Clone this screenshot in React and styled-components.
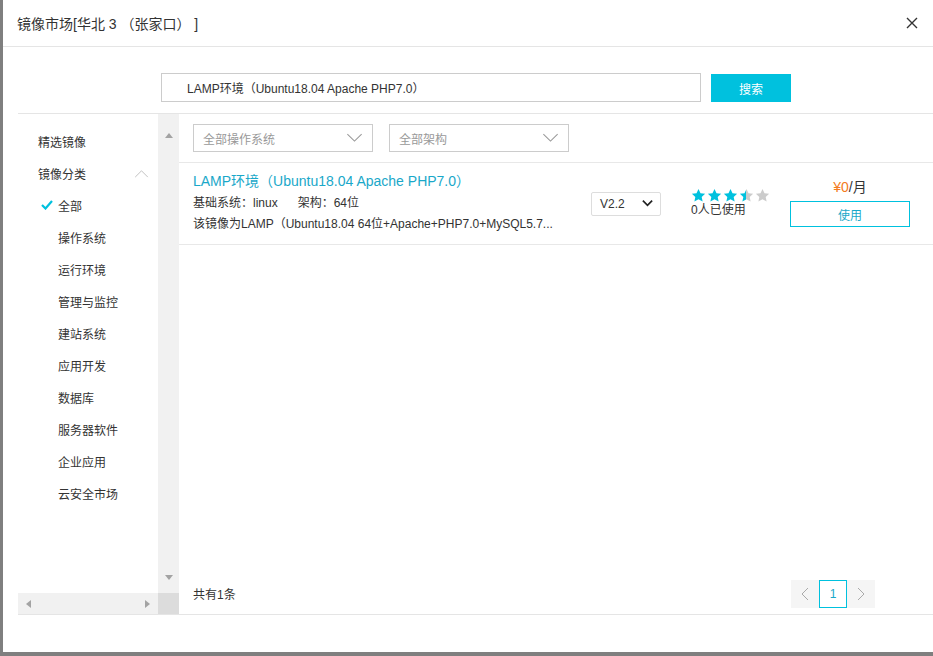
import React from "react";
import styled, { createGlobalStyle } from "styled-components";

const GlobalStyle = createGlobalStyle`
	html, body {
		margin: 0;
		padding: 0;
		background: #7f7f7f;
		font-family: "Liberation Sans", "Noto Sans CJK SC", sans-serif;
		color: #333;
	}
	* {
		box-sizing: border-box;
	}
`;

const categories = [
	"操作系统",
	"运行环境",
	"管理与监控",
	"建站系统",
	"应用开发",
	"数据库",
	"服务器软件",
	"企业应用",
	"云安全市场",
];

const TEAL = "#00c1de";

function Chevron({ size = 16, color = "#999", width = 1, up }) {
	return (
		<svg width={size} height={size * 0.6} viewBox="0 0 16 10">
			<path
				d={up ? "M1 9 L8 2 L15 9" : "M1 1 L8 8 L15 1"}
				fill="none"
				stroke={color}
				strokeWidth={width}
			/>
		</svg>
	);
}

function Star({ fill }) {
	return (
		<svg width="15" height="15" viewBox="0 0 24 24">
			<defs>
				<linearGradient id="half">
					<stop offset="50%" stopColor={TEAL} />
					<stop offset="50%" stopColor="#ccc" />
				</linearGradient>
			</defs>
			<path
				d="M12 1.5l3.2 6.9 7.4.8-5.5 5.1 1.5 7.4L12 17.9l-6.6 3.8 1.5-7.4L1.4 9.2l7.4-.8z"
				fill={fill === "half" ? "url(#half)" : fill ? TEAL : "#ccc"}
			/>
		</svg>
	);
}

function Triangle({ dir }) {
	const d = {
		up: "M0 5 L4 0 L8 5 Z",
		down: "M0 0 L8 0 L4 5 Z",
		left: "M5 0 L5 8 L0 4 Z",
		right: "M0 0 L0 8 L5 4 Z",
	}[dir];
	const vertical = dir === "up" || dir === "down";
	return (
		<svg width={vertical ? 8 : 5} height={vertical ? 5 : 8} viewBox={vertical ? "0 0 8 5" : "0 0 5 8"}>
			<path d={d} fill="#a3a3a3" />
		</svg>
	);
}

export default function App() {
	return (
		<>
			<GlobalStyle />
			<Dialog>
				<Header>
					<Title>镜像市场[华北 3 （张家口） ]</Title>
					<Close>
						<svg width="12" height="12" viewBox="0 0 12 12">
							<path d="M1 1 L11 11 M11 1 L1 11" stroke="#333" strokeWidth="1.4" />
						</svg>
					</Close>
				</Header>
				<SearchRow>
					<SearchInput>LAMP环境（Ubuntu18.04 Apache PHP7.0）</SearchInput>
					<SearchButton>搜索</SearchButton>
				</SearchRow>
				<Body>
					<Sidebar>
						<SideList>
							<SideHead>精选镜像</SideHead>
							<SideHead>
								镜像分类
								<Chevron size={15} color="#bbb" up />
							</SideHead>
							<SideItem $active>
								<Check>
									<svg width="12" height="10" viewBox="0 0 12 10">
										<path d="M1 5 L4.5 8.5 L11 1" fill="none" stroke={TEAL} strokeWidth="2.2" />
									</svg>
								</Check>
								全部
							</SideItem>
							{categories.map((c) => (
								<SideItem key={c}>{c}</SideItem>
							))}
						</SideList>
						<VScroll>
							<Triangle dir="up" />
							<Triangle dir="down" />
						</VScroll>
						<HScroll>
							<Triangle dir="left" />
							<Triangle dir="right" />
						</HScroll>
						<Corner />
					</Sidebar>
					<Main>
						<FilterRow>
							<FilterSelect>
								全部操作系统
								<Chevron size={17} color="#999" />
							</FilterSelect>
							<FilterSelect>
								全部架构
								<Chevron size={17} color="#999" />
							</FilterSelect>
						</FilterRow>
						<ImageRow>
							<Info>
								<ImageName>LAMP环境（Ubuntu18.04 Apache PHP7.0）</ImageName>
								<Meta>
									<span>基础系统：linux</span>
									<span>架构：64位</span>
								</Meta>
								<Desc>该镜像为LAMP（Ubuntu18.04 64位+Apache+PHP7.0+MySQL5.7...</Desc>
							</Info>
							<Version>
								V2.2
								<Chevron size={11} color="#222" width={2.6} />
							</Version>
							<Rating>
								<Stars>
									<Star fill />
									<Star fill />
									<Star fill />
									<Star fill="half" />
									<Star />
								</Stars>
								<span>0人已使用</span>
							</Rating>
							<PriceCol>
								<Price>
									<em>¥0</em>/月
								</Price>
								<UseButton>使用</UseButton>
							</PriceCol>
						</ImageRow>
						<Spacer />
						<Footer>
							<span>共有1条</span>
							<Pager>
								<PageBtn>
									<svg width="8" height="14" viewBox="0 0 8 14">
										<path d="M7 1 L1 7 L7 13" fill="none" stroke="#aaa" />
									</svg>
								</PageBtn>
								<PageBtn $current>1</PageBtn>
								<PageBtn>
									<svg width="8" height="14" viewBox="0 0 8 14">
										<path d="M1 1 L7 7 L1 13" fill="none" stroke="#aaa" />
									</svg>
								</PageBtn>
							</Pager>
						</Footer>
					</Main>
				</Body>
			</Dialog>
		</>
	);
}

const Dialog = styled.div`
	margin-left: 3px;
	width: 930px;
	height: 652px;
	background: #fff;
	display: flex;
	flex-direction: column;
`;

const Header = styled.div`
	height: 47px;
	flex-shrink: 0;
	display: flex;
	align-items: center;
	justify-content: space-between;
	padding: 0 15px 0 14px;
	border-bottom: 1px solid #e5e5e5;
`;

const Title = styled.div`
	font-size: 14px;
	color: #333;
	white-space: pre;
`;

const Close = styled.div`
	display: flex;
	align-items: center;
`;

const SearchRow = styled.div`
	height: 66px;
	flex-shrink: 0;
	display: flex;
	align-items: center;
	padding-left: 158px;
	padding-top: 14px;
`;

const SearchInput = styled.div`
	width: 540px;
	height: 29px;
	border: 1px solid #ccc;
	padding-left: 25px;
	display: flex;
	align-items: center;
	font-size: 12px;
	color: #333;
`;

const SearchButton = styled.div`
	margin-left: 10px;
	margin-top: 2px;
	width: 80px;
	height: 28px;
	background: ${TEAL};
	color: #fff;
	font-size: 12px;
	display: flex;
	align-items: center;
	justify-content: center;
`;

const Body = styled.div`
	margin-left: 15px;
	height: 502px;
	flex-shrink: 0;
	display: flex;
	border-top: 1px solid #e5e5e5;
	border-bottom: 1px solid #e5e5e5;
`;

const Sidebar = styled.div`
	width: 161px;
	display: grid;
	grid-template-columns: 140px 21px;
	grid-template-rows: 1fr 21px;
`;

const SideList = styled.div`
	padding-top: 11px;
	overflow: hidden;
`;

const SideHead = styled.div`
	height: 32px;
	padding-left: 20px;
	padding-right: 9px;
	display: flex;
	align-items: center;
	justify-content: space-between;
	font-size: 12px;
	color: #333;
`;

const SideItem = styled.div`
	height: 32px;
	padding-left: 40px;
	display: flex;
	align-items: center;
	position: relative;
	font-size: 12px;
	color: #333;
`;

const Check = styled.span`
	position: absolute;
	left: 23px;
	top: 11px;
	display: flex;
`;

const VScroll = styled.div`
	background: #f1f1f1;
	display: flex;
	flex-direction: column;
	justify-content: space-between;
	align-items: center;
	padding: 19px 0 13px;
`;

const HScroll = styled.div`
	background: #f1f1f1;
	display: flex;
	align-items: center;
	justify-content: space-between;
	padding: 0 8px;
`;

const Corner = styled.div`
	background: #dcdcdc;
`;

const Main = styled.div`
	flex: 1;
	display: flex;
	flex-direction: column;
`;

const FilterRow = styled.div`
	height: 49px;
	flex-shrink: 0;
	display: flex;
	align-items: center;
	gap: 16px;
	padding-left: 14px;
	border-bottom: 1px solid #e8e8e8;
`;

const FilterSelect = styled.div`
	width: 180px;
	height: 28px;
	border: 1px solid #ccc;
	padding: 0 9px;
	display: flex;
	align-items: center;
	justify-content: space-between;
	font-size: 12px;
	color: #999;
`;

const ImageRow = styled.div`
	height: 82px;
	flex-shrink: 0;
	display: flex;
	align-items: center;
	padding: 0 23px 0 14px;
	border-bottom: 1px solid #e8e8e8;
`;

const Info = styled.div`
	width: 398px;
	display: flex;
	flex-direction: column;
	gap: 5px;
	margin-top: -2px;
`;

const ImageName = styled.div`
	font-size: 14px;
	color: #1aa8c9;
	line-height: 17px;
`;

const Meta = styled.div`
	font-size: 12px;
	color: #333;
	display: flex;
	gap: 20px;
	line-height: 16px;
`;

const Desc = styled.div`
	font-size: 12px;
	color: #333;
	line-height: 16px;
	white-space: nowrap;
`;

const Version = styled.div`
	width: 70px;
	height: 24px;
	border: 1px solid #ddd;
	border-radius: 2px;
	padding: 0 7px 0 8px;
	display: flex;
	align-items: center;
	justify-content: space-between;
	font-size: 12px;
	color: #333;
`;

const Rating = styled.div`
	margin-left: 30px;
	width: 99px;
	display: flex;
	flex-direction: column;
	font-size: 12px;
	color: #333;
	margin-top: -3px;
	line-height: 14px;
`;

const Stars = styled.div`
	display: flex;
	gap: 1px;
`;

const PriceCol = styled.div`
	width: 120px;
	display: flex;
	flex-direction: column;
	align-items: center;
	gap: 5px;
	margin-top: -4px;
`;

const Price = styled.div`
	font-size: 14px;
	color: #333;
	em {
		font-style: normal;
		color: #f47b20;
	}
`;

const UseButton = styled.div`
	width: 120px;
	height: 26px;
	border: 1px solid ${TEAL};
	color: #1aa8c9;
	font-size: 12px;
	display: flex;
	align-items: center;
	justify-content: center;
`;

const Spacer = styled.div`
	flex: 1;
`;

const Footer = styled.div`
	height: 49px;
	flex-shrink: 0;
	display: flex;
	align-items: center;
	justify-content: space-between;
	padding: 8px 58px 0 14px;
	font-size: 12px;
	color: #333;
`;

const Pager = styled.div`
	display: flex;
	background: #f5f5f5;
`;

const PageBtn = styled.div`
	width: 28px;
	height: 28px;
	display: flex;
	align-items: center;
	justify-content: center;
	font-size: 12px;
	color: #1aa8c9;
	background: ${(p) => (p.$current ? "#fff" : "transparent")};
	border: 1px solid ${(p) => (p.$current ? TEAL : "transparent")};
`;
